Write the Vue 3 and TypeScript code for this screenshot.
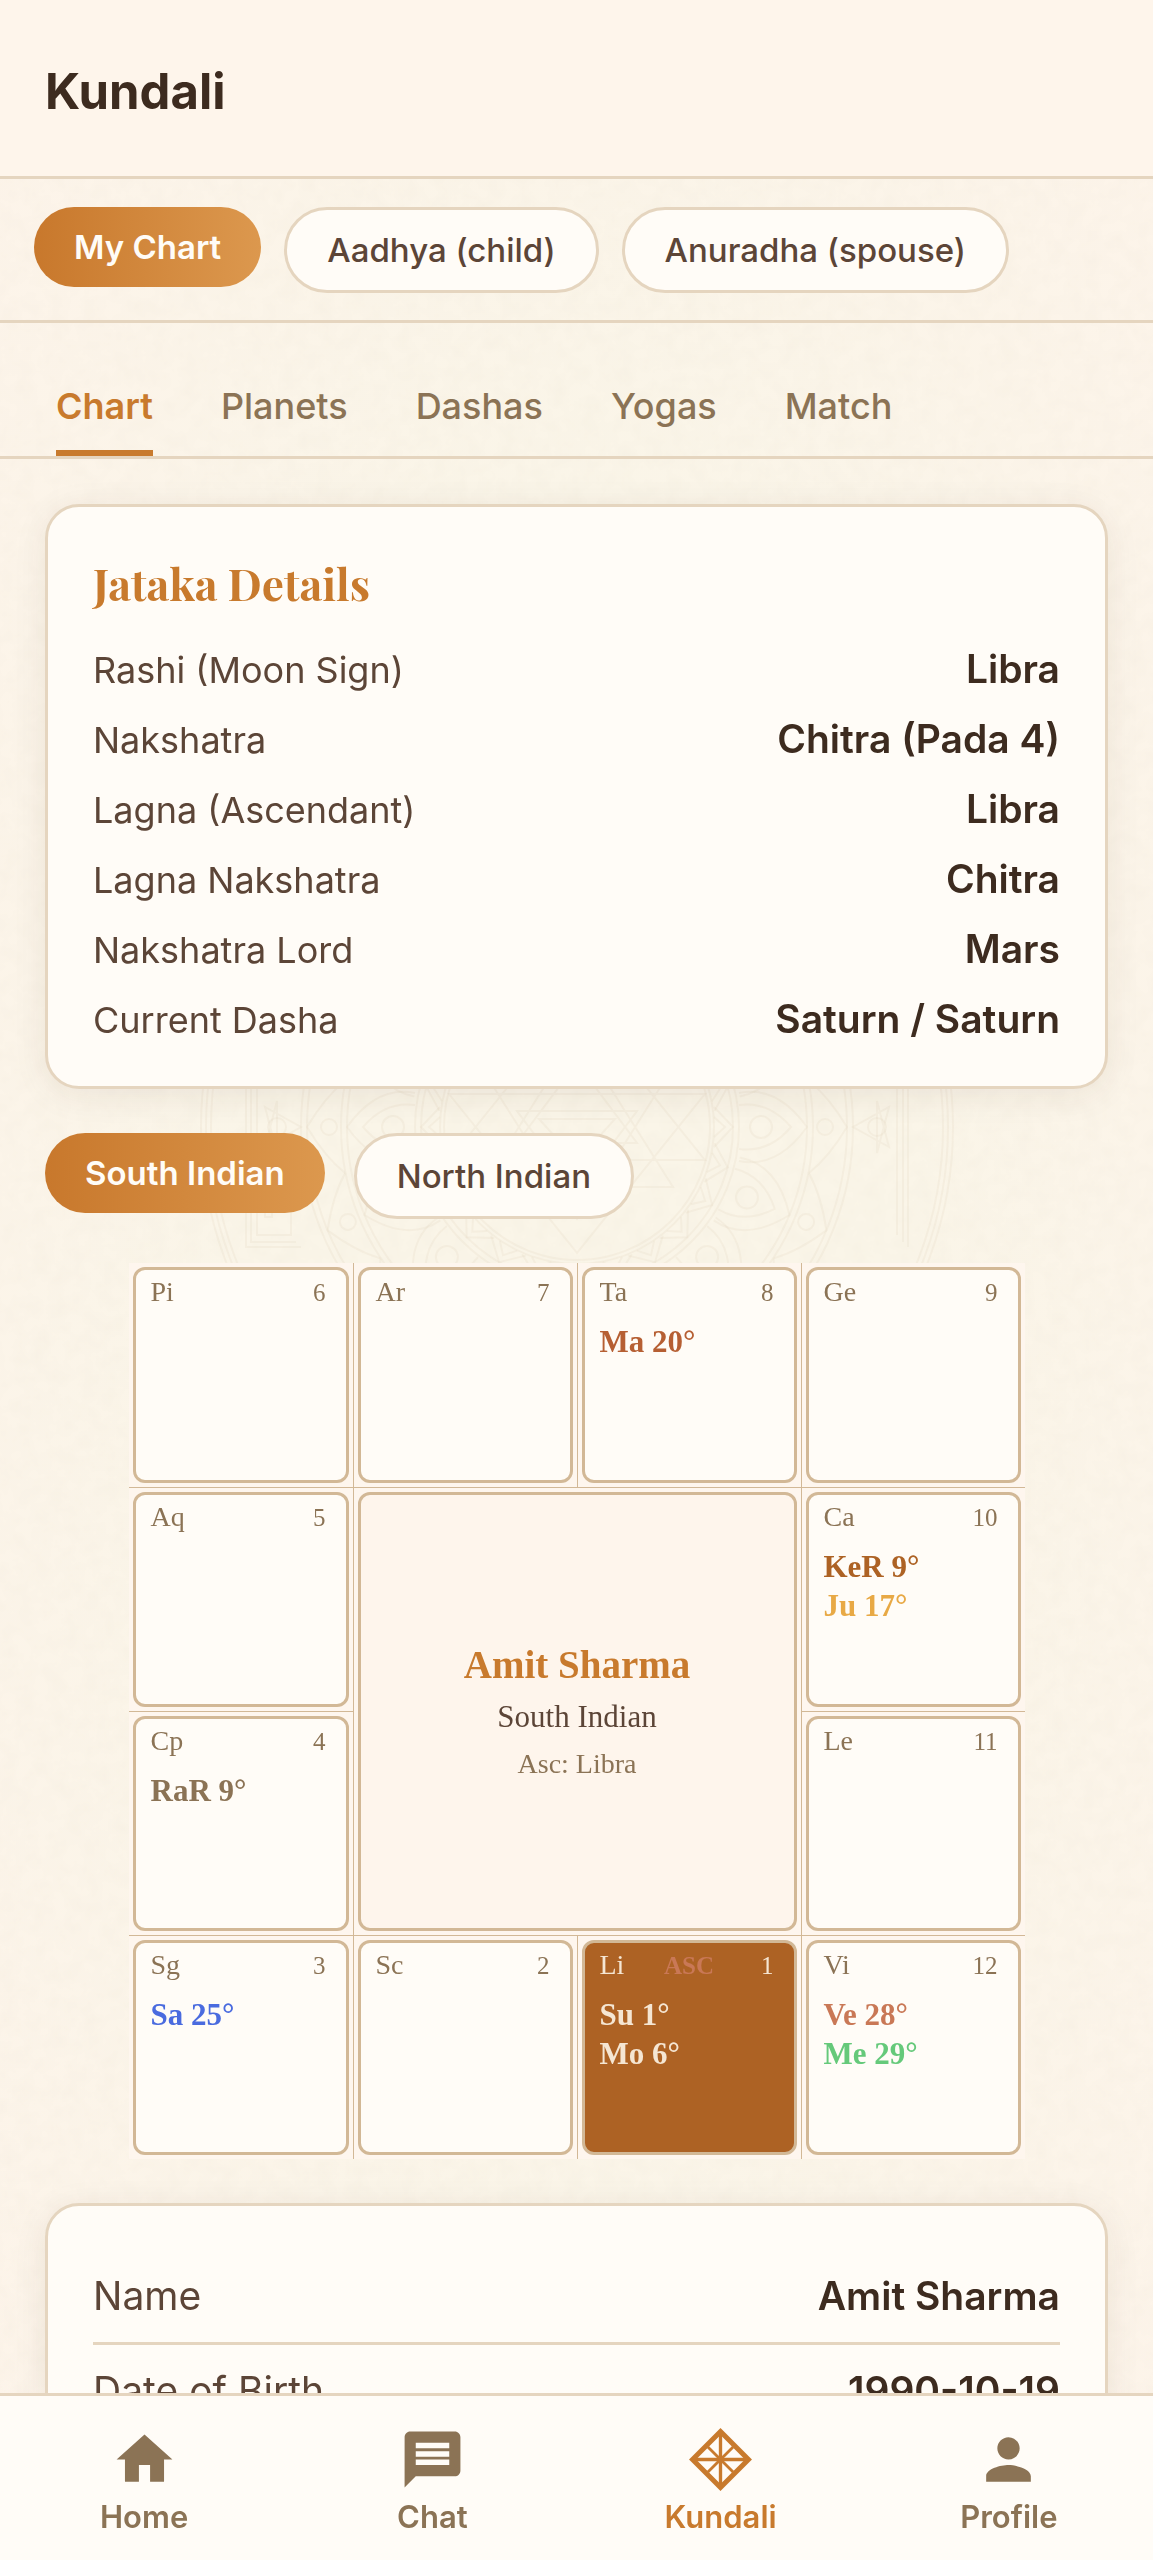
<script setup lang="ts">
import { ref } from 'vue'

interface Detail {
  label: string
  value: string
}

interface Planet {
  name: string
  color: string
}

interface House {
  sign: string
  num: number
  area: string
  planets: Planet[]
  asc?: boolean
}

const people = ['My Chart', 'Aadhya (child)', 'Anuradha (spouse)']
const tabs = ['Chart', 'Planets', 'Dashas', 'Yogas', 'Match']
const chartStyles = ['South Indian', 'North Indian']

const person = ref(people[0])
const tab = ref(tabs[0])
const chartStyle = ref(chartStyles[0])

const details: Detail[] = [
  { label: 'Rashi (Moon Sign)', value: 'Libra' },
  { label: 'Nakshatra', value: 'Chitra (Pada 4)' },
  { label: 'Lagna (Ascendant)', value: 'Libra' },
  { label: 'Lagna Nakshatra', value: 'Chitra' },
  { label: 'Nakshatra Lord', value: 'Mars' },
  { label: 'Current Dasha', value: 'Saturn / Saturn' },
]

const birth: Detail[] = [
  { label: 'Name', value: 'Amit Sharma' },
  { label: 'Date of Birth', value: '1990-10-19' },
]

const houses: House[] = [
  { sign: 'Pi', num: 6, area: '1 / 1', planets: [] },
  { sign: 'Ar', num: 7, area: '1 / 2', planets: [] },
  { sign: 'Ta', num: 8, area: '1 / 3', planets: [{ name: 'Ma 20°', color: '#b65f33' }] },
  { sign: 'Ge', num: 9, area: '1 / 4', planets: [] },
  { sign: 'Aq', num: 5, area: '2 / 1', planets: [] },
  {
    sign: 'Ca',
    num: 10,
    area: '2 / 4',
    planets: [
      { name: 'KeR 9°', color: '#ad6224' },
      { name: 'Ju 17°', color: '#e8a945' },
    ],
  },
  { sign: 'Cp', num: 4, area: '3 / 1', planets: [{ name: 'RaR 9°', color: '#8b7355' }] },
  { sign: 'Le', num: 11, area: '3 / 4', planets: [] },
  { sign: 'Sg', num: 3, area: '4 / 1', planets: [{ name: 'Sa 25°', color: '#4a6bdf' }] },
  { sign: 'Sc', num: 2, area: '4 / 2', planets: [] },
  {
    sign: 'Li',
    num: 1,
    area: '4 / 3',
    asc: true,
    planets: [
      { name: 'Su 1°', color: '#f5e6d3' },
      { name: 'Mo 6°', color: '#f5e6d3' },
    ],
  },
  {
    sign: 'Vi',
    num: 12,
    area: '4 / 4',
    planets: [
      { name: 'Ve 28°', color: '#c97856' },
      { name: 'Me 29°', color: '#65c97a' },
    ],
  },
]

const rings = [376, 371, 366, 276, 270, 236, 230, 162, 156, 137, 133]
const petals = Array.from({ length: 16 }, (_, i) => i * 22.5)
const spikes = Array.from({ length: 24 }, (_, i) => i * 15)
const sides = [0, 90, 180, 270]
</script>

<template>
  <div class="page">
    <svg class="paper" aria-hidden="true">
      <filter id="grain" x="0" y="0" width="100%" height="100%">
        <feTurbulence type="fractalNoise" baseFrequency="0.06" numOctaves="4" seed="4" />
        <feColorMatrix values="0 0 0 0 0.6  0 0 0 0 0.54  0 0 0 0 0.42  0.1 0 0 0 -0.03" />
      </filter>
      <rect width="100%" height="100%" filter="url(#grain)" />
    </svg>

    <header class="top">
      <h1>Kundali</h1>
    </header>

    <div class="people">
      <button
        v-for="p in people"
        :key="p"
        type="button"
        class="pill"
        :class="{ on: p === person }"
        @click="person = p"
      >
        {{ p }}
      </button>
    </div>

    <div class="tabs" role="tablist">
      <button
        v-for="t in tabs"
        :key="t"
        type="button"
        role="tab"
        class="tab"
        :class="{ on: t === tab }"
        :aria-selected="t === tab"
        @click="tab = t"
      >
        {{ t }}
      </button>
    </div>

    <main class="content">
      <section class="card">
        <h2>Jataka Details</h2>
        <dl class="details">
          <div v-for="d in details" :key="d.label" class="row">
            <dt>{{ d.label }}</dt>
            <dd>{{ d.value }}</dd>
          </div>
        </dl>
      </section>

      <div class="switch">
        <svg class="mandala" viewBox="-380 -380 760 760" aria-hidden="true">
          <circle v-for="r in rings" :key="r" :r="r" />
          <g v-for="a in petals" :key="'p' + a" :transform="`rotate(${a})`">
            <path d="M-34 -162Q-42 -200 0 -230Q42 -200 34 -162M-22 -162Q-26 -192 0 -214Q26 -192 22 -162" />
            <path d="M-46 -232Q-30 -252 0 -270Q30 -252 46 -232" />
            <circle cy="-248" r="8" />
            <circle cy="-184" r="11" />
          </g>
          <g v-for="a in spikes" :key="'s' + a" :transform="`rotate(${a})`">
            <path d="M-20 -137L0 -156L20 -137M-10 -137L0 -148L10 -137" />
          </g>
          <g v-for="a in sides" :key="'f' + a" :transform="`rotate(${a})`">
            <path d="M-331 -120V120H-276M-326 -115V115H-281M-320 -108V108H-286V60H-305V90H-312V50H-278" />
            <path d="M-312 -20L-276 0L-312 20L-300 -26V26Z" />
            <circle cx="-300" r="9" />
          </g>
          <path
            d="M-128 -33H128L0 126ZM-128 33H128L0 -126ZM-96 -60H96L0 92ZM-96 60H96L0 -92ZM-60 -16H60L0 64ZM-60 16H60L0 -64ZM-38 -8H38L0 34Z"
          />
        </svg>
        <button
          v-for="s in chartStyles"
          :key="s"
          type="button"
          class="pill"
          :class="{ on: s === chartStyle }"
          @click="chartStyle = s"
        >
          {{ s }}
        </button>
      </div>

      <section class="chart" aria-label="South Indian chart">
        <div
          v-for="h in houses"
          :key="h.num"
          class="tile"
          :class="{ first: h.area.endsWith('1'), head: h.area.startsWith('1') }"
          :style="{ gridArea: h.area }"
        >
          <div class="house" :class="{ asc: h.asc }">
            <div class="house-top">
              <span class="sign">{{ h.sign }}</span>
              <strong v-if="h.asc" class="mark">ASC</strong>
              <span class="num">{{ h.num }}</span>
            </div>
            <div v-for="p in h.planets" :key="p.name" class="planet" :style="{ color: p.color }">
              {{ p.name }}
            </div>
          </div>
        </div>
        <div class="tile middle">
          <div class="house center">
            <strong class="who">Amit Sharma</strong>
            <span class="kind">South Indian</span>
            <span class="lagna">Asc: Libra</span>
          </div>
        </div>
      </section>

      <section class="card">
        <dl class="birth">
          <div v-for="d in birth" :key="d.label" class="row">
            <dt>{{ d.label }}</dt>
            <dd>{{ d.value }}</dd>
          </div>
        </dl>
      </section>
    </main>

    <nav class="bottom">
      <a href="#home">
        <svg viewBox="0 0 24 24" aria-hidden="true"><path d="M10 20v-6h4v6h5v-8h3L12 3 2 12h3v8z" /></svg>
        <span>Home</span>
      </a>
      <a href="#chat">
        <svg viewBox="0 0 24 24" aria-hidden="true">
          <path
            d="M20 2H4c-1.1 0-1.99.9-1.99 2L2 22l4-4h14c1.1 0 2-.9 2-2V4c0-1.1-.9-2-2-2zm-2 12H6v-2h12v2zm0-3H6V9h12v2zm0-3H6V6h12v2z"
          />
        </svg>
        <span>Chat</span>
      </a>
      <a href="#kundali" class="on" aria-current="page">
        <svg viewBox="0 0 24 24" class="line" aria-hidden="true">
          <path d="M12 2L22 12L12 22L2 12Z" stroke-width="1.8" />
          <path d="M12 2V22M2 12H22" stroke-width="1.2" />
          <path d="M7.5 7.5L16.5 16.5M16.5 7.5L7.5 16.5" stroke-width="1" />
        </svg>
        <span>Kundali</span>
      </a>
      <a href="#profile">
        <svg viewBox="0 0 24 24" aria-hidden="true">
          <path
            d="M12 12c2.21 0 4-1.79 4-4s-1.79-4-4-4-4 1.79-4 4 1.79 4 4 4zm0 2c-2.67 0-8 1.34-8 4v2h16v-2c0-2.66-5.33-4-8-4z"
          />
        </svg>
        <span>Profile</span>
      </a>
    </nav>
  </div>
</template>

<style>
body {
  margin: 0;
  background: #fdf5ea;
}
</style>

<style scoped>
.page {
  position: relative;
  isolation: isolate;
  display: flex;
  flex-direction: column;
  height: 100vh;
  overflow: hidden;
  background: radial-gradient(ellipse at center, #faf5e8 40%, #fdf4ea 100%);
  color: #3d2b1f;
  font-family: Inter, "Liberation Sans", sans-serif;
}

.paper {
  position: absolute;
  inset: 0;
  z-index: -2;
  width: 100%;
  height: 100%;
}

.top {
  padding: 63px 45px 55px;
  border-bottom: 3px solid #e5d5bf;
  background: #fef5eb;
}

h1 {
  margin: 0;
  font-size: 49px;
  line-height: 58px;
  font-weight: 700;
}

.people {
  display: flex;
  align-items: flex-start;
  gap: 23px;
  padding: 28px 34px 27px;
  border-bottom: 3px solid #e5d5bf;
}

button {
  margin: 0;
  border: 0;
  background: none;
  font-family: inherit;
  white-space: nowrap;
  cursor: pointer;
}

.pill {
  padding: 20px 40px;
  border: 3px solid #e5d5bf;
  border-radius: 56px;
  background: #fffcf7;
  color: #5c4537;
  font-size: 33px;
  line-height: 40px;
  font-weight: 500;
}

.pill.on {
  border: 0;
  background: linear-gradient(90deg, #c8782c, #dc984e);
  color: #fffcf7;
  font-weight: 600;
}

.tabs {
  display: flex;
  gap: 68px;
  padding: 0 56px;
  border-bottom: 3px solid #e5d5bf;
}

.tab {
  padding: 60px 0 21px;
  border-bottom: 6px solid transparent;
  color: #8b7355;
  font-size: 36px;
  line-height: 46px;
  font-weight: 500;
}

.tab.on {
  border-bottom-color: #c87a2d;
  color: #c87a2d;
  font-weight: 600;
}

.content {
  display: flex;
  flex: 1;
  flex-direction: column;
  gap: 44px;
  min-height: 0;
  padding: 45px;
  overflow-y: auto;
  scrollbar-width: none;
}

.content > * {
  flex-shrink: 0;
}

.card {
  padding: 44px 45px;
  border: 3px solid #e5d5bf;
  border-radius: 34px;
  background: #fffcf7;
  box-shadow: 0 6px 34px rgba(61, 43, 31, 0.08);
}

h2 {
  margin: 0 0 32px;
  color: #c87a2d;
  font-family: "Playfair Display", "Liberation Serif", serif;
  font-size: 44px;
  line-height: 64px;
  font-weight: 700;
}

dl,
dd {
  margin: 0;
}

.row {
  display: flex;
  align-items: baseline;
  justify-content: space-between;
}

.details {
  display: flex;
  flex-direction: column;
  gap: 25px;
}

dt {
  color: #5c4537;
  font-size: 36px;
}

dd {
  font-size: 39px;
  font-weight: 600;
}

.details .row {
  line-height: 44px;
}

.birth .row {
  padding: 22px 0;
  border-bottom: 3px solid #e5d5bf;
  line-height: 48px;
}

.birth dt {
  font-size: 39px;
}

.switch {
  position: relative;
  display: flex;
  align-items: flex-start;
  gap: 29px;
}

/* watermark showing through between the card and the chart */
.mandala {
  position: absolute;
  top: 50%;
  left: 50%;
  z-index: -1;
  width: 760px;
  height: 760px;
  margin: -429px 0 0 -380px;
  fill: none;
  stroke: #b9a27c;
  stroke-opacity: 0.08;
  stroke-width: 2;
}

.chart {
  display: grid;
  grid-template-columns: repeat(4, minmax(0, 1fr));
  grid-template-rows: repeat(4, minmax(0, 1fr));
  align-self: center;
  box-sizing: border-box;
  width: 100%;
  max-width: 896px;
  aspect-ratio: 1;
  background: #fef6ee;
  font-family: "Liberation Serif", "Times New Roman", serif;
}

.tile {
  display: flex;
  box-sizing: border-box;
  padding: 4px;
  border-top: 1px solid #d2b896;
  border-left: 1px solid #d2b896;
}

.tile.first {
  border-left: 0;
}

.tile.head {
  border-top: 0;
}

.middle {
  grid-area: 2 / 2 / 4 / 4;
}

.house {
  flex: 1;
  min-width: 0;
  padding: 6px 15px;
  border: 3px solid #d2b896;
  border-radius: 12px;
  background: #fffcf7;
}

.house-top {
  display: grid;
  grid-template-columns: 1fr auto 1fr;
  align-items: baseline;
  margin-bottom: 13px;
  color: #8b7355;
  line-height: 32px;
}

.sign {
  font-size: 28px;
}

.mark {
  color: #c97856;
  font-size: 25px;
}

.num {
  grid-column: 3;
  padding-right: 5px;
  font-size: 25px;
  text-align: right;
}

.planet {
  font-size: 31px;
  line-height: 39px;
  font-weight: 700;
}

.asc {
  background: #ad6224;
}

.asc .sign,
.asc .num {
  color: #f5e6d3;
}

.center {
  display: flex;
  flex-direction: column;
  align-items: center;
  justify-content: center;
  gap: 4px;
  background: #fef5ec;
}

.who {
  color: #c87a2d;
  font-size: 39px;
  line-height: 50px;
}

.kind {
  color: #5c4537;
  font-size: 31px;
  line-height: 46px;
}

.lagna {
  color: #8b7355;
  font-size: 28px;
  line-height: 40px;
}

.bottom {
  display: grid;
  grid-template-columns: repeat(4, 1fr);
  padding: 30px 0 24px;
  border-top: 3px solid #e5d5bf;
  background: #fffcf7;
}

.bottom a {
  display: flex;
  flex-direction: column;
  align-items: center;
  gap: 5px;
  color: #8b7355;
  font-size: 31px;
  line-height: 38px;
  font-weight: 600;
  text-decoration: none;
}

.bottom .on {
  color: #c87a2d;
}

.bottom svg {
  width: 67px;
  height: 67px;
  fill: currentColor;
}

.bottom .line {
  fill: none;
  stroke: currentColor;
}
</style>
